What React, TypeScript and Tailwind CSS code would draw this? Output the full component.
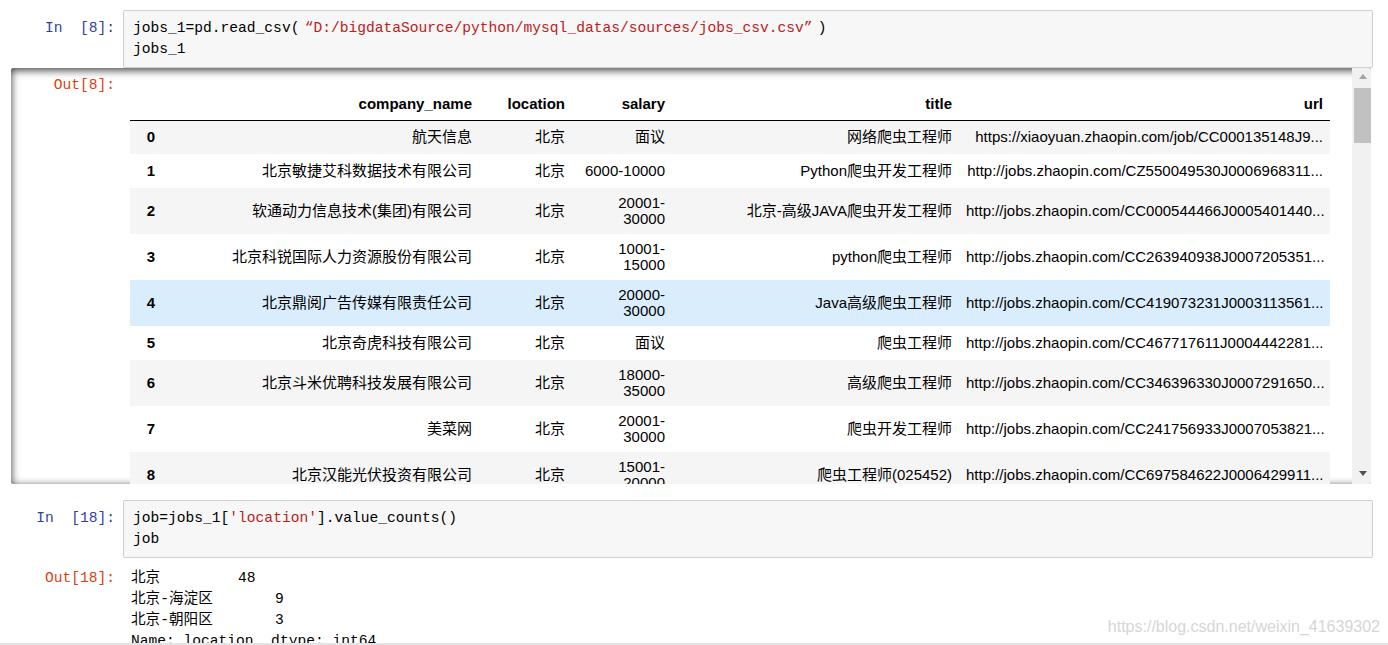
import React from "react";

const mono = "font-['Liberation_Mono','Noto_Sans_CJK_SC',monospace] text-[14.6px] leading-[21px]";
const sans = "font-['Liberation_Sans','Noto_Sans_CJK_SC',sans-serif]";

type Row = {
  i: number;
  company: string;
  loc: string;
  salary: string[];
  title: string;
  url: string;
  h: "s" | "t";
  bg: "g" | "w" | "b";
};

const rows: Row[] = [
  { i: 0, company: "航天信息", loc: "北京", salary: ["面议"], title: "网络爬虫工程师", url: "https://xiaoyuan.zhaopin.com/job/CC000135148J9...", h: "s", bg: "g" },
  { i: 1, company: "北京敏捷艾科数据技术有限公司", loc: "北京", salary: ["6000-10000"], title: "Python爬虫开发工程师", url: "http://jobs.zhaopin.com/CZ550049530J0006968311...", h: "s", bg: "w" },
  { i: 2, company: "软通动力信息技术(集团)有限公司", loc: "北京", salary: ["20001-", "30000"], title: "北京-高级JAVA爬虫开发工程师", url: "http://jobs.zhaopin.com/CC000544466J0005401440...", h: "t", bg: "g" },
  { i: 3, company: "北京科锐国际人力资源股份有限公司", loc: "北京", salary: ["10001-", "15000"], title: "python爬虫工程师", url: "http://jobs.zhaopin.com/CC263940938J0007205351...", h: "t", bg: "w" },
  { i: 4, company: "北京鼎阅广告传媒有限责任公司", loc: "北京", salary: ["20000-", "30000"], title: "Java高级爬虫工程师", url: "http://jobs.zhaopin.com/CC419073231J0003113561...", h: "t", bg: "b" },
  { i: 5, company: "北京奇虎科技有限公司", loc: "北京", salary: ["面议"], title: "爬虫工程师", url: "http://jobs.zhaopin.com/CC467717611J0004442281...", h: "s", bg: "w" },
  { i: 6, company: "北京斗米优聘科技发展有限公司", loc: "北京", salary: ["18000-", "35000"], title: "高级爬虫工程师", url: "http://jobs.zhaopin.com/CC346396330J0007291650...", h: "t", bg: "g" },
  { i: 7, company: "美菜网", loc: "北京", salary: ["20001-", "30000"], title: "爬虫开发工程师", url: "http://jobs.zhaopin.com/CC241756933J0007053821...", h: "t", bg: "w" },
  { i: 8, company: "北京汉能光伏投资有限公司", loc: "北京", salary: ["15001-", "20000"], title: "爬虫工程师(025452)", url: "http://jobs.zhaopin.com/CC697584622J0006429911...", h: "t", bg: "g" },
];

function rowClass(r: Row) {
  const h = r.h === "s" ? "h-[34px]" : "h-[46px]";
  const bg = r.bg === "g" ? "bg-[#f5f5f5]" : r.bg === "b" ? "bg-[#d9edfd]" : "bg-white";
  return `${h} ${bg}`;
}

const td = "px-[7px] py-0 text-right align-middle whitespace-nowrap leading-[16px]";

export default function App() {
  return (
    <div className={`relative w-[1388px] h-[645px] overflow-hidden bg-white text-black ${sans}`}>
      {/* Cell 1 input */}
      <div className="flex pt-[10px]">
        <div className={`w-[123px] shrink-0 pr-[8px] pt-[8px] text-right text-[#303f9f] whitespace-pre ${mono}`}>{"In  [8]:"}</div>
        <div className={`w-[1250px] border border-[#cfcfcf] rounded-[2px] bg-[#f7f7f7] pl-[9px] pt-[7px] pb-[7px] whitespace-pre ${mono}`}>
          <div>
            jobs_1=pd.read_csv(
            <span className="text-[#ba2121]">
              <span className="inline-block w-[14px] text-right">“</span>D:/bigdataSource/python/mysql_datas/sources/jobs_csv.csv<span className="inline-block w-[14px] text-left">”</span>
            </span>
            )
          </div>
          <div>jobs_1</div>
        </div>
      </div>

      {/* Cell 1 output (scrolled) */}
      <div className="ml-[11px] w-[1360px] h-[416px] flex rounded-[2px] shadow-[inset_0_2px_8px_rgba(0,0,0,0.8)] overflow-hidden">
        <div className={`w-[112px] shrink-0 pr-[8px] pt-[7px] text-right text-[#d84315] ${mono}`}>Out[8]:</div>
        <div className="flex-1 overflow-hidden">
          <table className="ml-[7px] mt-[21px] w-[1200px] table-fixed border-collapse text-[15px]">
            <colgroup>
              <col className="w-[32px]" />
              <col className="w-[317px]" />
              <col className="w-[93px]" />
              <col className="w-[100px]" />
              <col className="w-[287px]" />
              <col className="w-[371px]" />
            </colgroup>
            <thead>
              <tr className="h-[31px]">
                <th className="px-[7px] border-b border-black"></th>
                <th className="px-[7px] text-right font-bold border-b border-black align-middle">company_name</th>
                <th className="px-[7px] text-right font-bold border-b border-black align-middle">location</th>
                <th className="px-[7px] text-right font-bold border-b border-black align-middle">salary</th>
                <th className="px-[7px] text-right font-bold border-b border-black align-middle">title</th>
                <th className="px-[7px] text-right font-bold border-b border-black align-middle">url</th>
              </tr>
            </thead>
            <tbody>
              {rows.map((r) => (
                <tr key={r.i} className={rowClass(r)}>
                  <th className={`${td} font-bold`}>{r.i}</th>
                  <td className={td}>{r.company}</td>
                  <td className={td}>{r.loc}</td>
                  <td className={td}>
                    {r.salary.map((s, k) => (
                      <div key={k}>{s}</div>
                    ))}
                  </td>
                  <td className={td}>{r.title}</td>
                  <td className={td}>{r.url}</td>
                </tr>
              ))}
            </tbody>
          </table>
        </div>
        {/* scrollbar */}
        <div className="w-[19px] shrink-0 bg-[#f1f1f1] flex flex-col">
          <div className="h-[17px] flex items-center justify-center pl-[2px]">
            <svg width="8" height="5" viewBox="0 0 8 5"><path d="M4 0 L8 5 L0 5 Z" fill="#a3a3a3" /></svg>
          </div>
          <div className="flex-1 relative">
            <div className="ml-[2px] mt-[3px] h-[55px] bg-[#c1c1c1]"></div>
          </div>
          <div className="h-[17px] flex items-center justify-center pl-[2px] pb-[4px]">
            <svg width="8" height="5" viewBox="0 0 8 5"><path d="M0 0 L8 0 L4 5 Z" fill="#505050" /></svg>
          </div>
        </div>
      </div>

      {/* Cell 2 input */}
      <div className="flex mt-[16px]">
        <div className={`w-[123px] shrink-0 pr-[8px] pt-[8px] text-right text-[#303f9f] whitespace-pre ${mono}`}>{"In  [18]:"}</div>
        <div className={`w-[1250px] border border-[#cfcfcf] rounded-[2px] bg-[#f7f7f7] pl-[9px] pt-[7px] pb-[7px] whitespace-pre ${mono}`}>
          <div>
            job=jobs_1[<span className="text-[#ba2121]">'location'</span>].value_counts()
          </div>
          <div>job</div>
        </div>
      </div>

      {/* Cell 2 output */}
      <div className="flex pt-[10px]">
        <div className={`w-[123px] shrink-0 pr-[8px] text-right text-[#d84315] ${mono}`}>Out[18]:</div>
        <div className={`pl-[8px] whitespace-pre ${mono}`}>
          <div>
            <span className="inline-block w-[107px]">北京</span>48
          </div>
          <div>
            <span className="inline-block w-[144px]">北京-海淀区</span>9
          </div>
          <div>
            <span className="inline-block w-[144px]">北京-朝阳区</span>3
          </div>
          <div>Name: location, dtype: int64</div>
        </div>
      </div>

      {/* watermark */}
      <div className={`absolute right-[8px] bottom-[8px] text-[16px] leading-[20px] text-[#d6d6d6] ${sans}`}>
        https://blog.csdn.net/weixin_41639302
      </div>
      <div className="absolute left-0 right-0 bottom-0 h-[2px] bg-[#e4e4e4]"></div>
    </div>
  );
}
